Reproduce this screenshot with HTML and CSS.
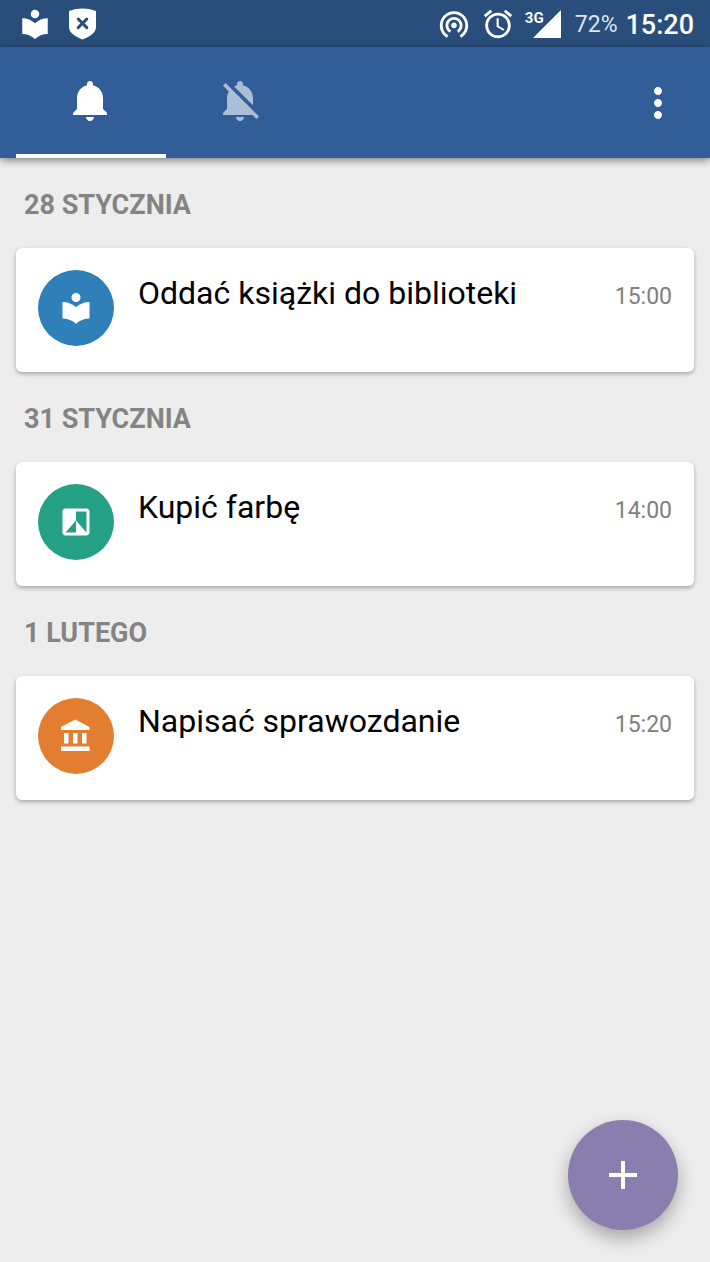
FILE: index.html
```html
<!DOCTYPE html>
<html lang="pl">
<head>
  <meta charset="UTF-8">
  <meta name="viewport" content="width=device-width, initial-scale=1.0">
  <title>Przypomnienia</title>
  <link rel="stylesheet" href="styles.css">
</head>
<body>

  <div class="statusbar">
    <div class="notifications">
      <svg class="status-icon" viewBox="0 0 24 24"><path d="M12 11.55C9.64 9.35 6.48 8 3 8v11c3.48 0 6.64 1.35 9 3.55 2.36-2.19 5.52-3.55 9-3.55V8c-3.48 0-6.64 1.35-9 3.55zM12 8c1.66 0 3-1.34 3-3s-1.34-3-3-3-3 1.34-3 3 1.34 3 3 3z"/></svg>
      <svg class="shield" viewBox="0 0 27 32">
        <path d="M0 3Q13.500-1.800 27 3V19C27 25 20 29 13.500 31.500C7 29 0 25 0 19z"/>
        <path class="cross" d="M9.200 11l8.600 8.600M17.800 11l-8.600 8.600"/>
      </svg>
    </div>
    <div class="system">
      <svg class="status-icon" viewBox="0 0 24 24"><path d="M12 11c-1.100 0-2 .9-2 2s.9 2 2 2 2-.9 2-2-.9-2-2-2zm6 2c0-3.310-2.690-6-6-6s-6 2.690-6 6c0 2.220 1.210 4.150 3 5.190l1-1.740c-1.190-.7-2-1.970-2-3.450 0-2.210 1.790-4 4-4s4 1.790 4 4c0 1.480-.81 2.750-2 3.450l1 1.740c1.790-1.040 3-2.970 3-5.190zM12 3C6.480 3 2 7.480 2 13c0 3.700 2.010 6.920 4.990 8.650l1-1.730C5.610 18.530 4 15.960 4 13c0-4.420 3.580-8 8-8s8 3.580 8 8c0 2.960-1.610 5.530-4 6.920l1 1.730c2.990-1.730 5-4.950 5-8.650 0-5.520-4.480-10-10-10z"/></svg>
      <svg class="status-icon" viewBox="0 0 24 24"><path d="M22 5.720l-4.600-3.860-1.290 1.530 4.600 3.860L22 5.720zM7.880 3.390L6.600 1.860 2 5.710l1.290 1.530 4.590-3.850zM12.500 8H11v6l4.750 2.850.75-1.230-4-2.370V8zM12 4c-4.970 0-9 4.030-9 9s4.020 9 9 9c4.970 0 9-4.030 9-9s-4.030-9-9-9zm0 16c-3.870 0-7-3.130-7-7s3.130-7 7-7 7 3.130 7 7-3.130 7-7 7z"/></svg>
      <div class="network">
        <svg class="signal" viewBox="0 0 28 28"><path d="M28 0v28H0z"/></svg>
        <span class="network-type">3G</span>
      </div>
      <span class="battery">72%</span>
      <span class="clock">15:20</span>
    </div>
  </div>

  <header class="appbar">
    <nav class="tabs">
      <button class="tab active" aria-label="Aktywne">
        <svg class="icon" viewBox="0 0 24 24"><path d="M11.500 22c1.100 0 2-.9 2-2h-4c0 1.100.9 2 2 2zm6.500-6v-5.500c0-3.070-2.130-5.640-5-6.320V3.500c0-.83-.67-1.500-1.500-1.500S10 2.670 10 3.500v.68c-2.870.68-5 3.250-5 6.320V16l-2 2v1h17v-1l-2-2z"/></svg>
      </button>
      <button class="tab" aria-label="Nieaktywne">
        <svg class="icon" viewBox="0 0 24 24"><path d="M11.500 22c1.100 0 2-.9 2-2h-4c0 1.100.9 2 2 2zM18 10.500c0-3.070-2.130-5.640-5-6.320V3.500c0-.83-.67-1.500-1.500-1.500S10 2.670 10 3.500v.68c-.51.12-.99.32-1.450.56L18 14.180V10.500zm-.27 8.500l2 2L21 19.730 4.270 3 3 4.270l2.920 2.920C5.340 8.160 5 9.290 5 10.500V16l-2 2v1h14.730z"/></svg>
      </button>
    </nav>
    <button class="menu-btn" aria-label="Menu">
      <svg class="icon" viewBox="0 0 24 24"><path d="M12 8c1.100 0 2-.9 2-2s-.9-2-2-2-2 .9-2 2 .9 2 2 2zm0 2c-1.100 0-2 .9-2 2s.9 2 2 2 2-.9 2-2-.9-2-2-2zm0 6c-1.100 0-2 .9-2 2s.9 2 2 2 2-.9 2-2-.9-2-2-2z"/></svg>
    </button>
  </header>

  <main class="list">
    <h2>28 STYCZNIA</h2>
    <article class="card">
      <div class="avatar blue">
        <svg viewBox="0 0 24 24"><path d="M12 11.550C9.640 9.350 6.480 8 3 8v11c3.480 0 6.640 1.350 9 3.550 2.360-2.190 5.520-3.550 9-3.550V8c-3.480 0-6.640 1.350-9 3.550zM12 8c1.660 0 3-1.340 3-3s-1.340-3-3-3-3 1.340-3 3 1.340 3 3 3z"/></svg>
      </div>
      <div class="card-text">
        <h3>Oddać książki do biblioteki</h3>
        <time>15:00</time>
      </div>
    </article>

    <h2>31 STYCZNIA</h2>
    <article class="card">
      <div class="avatar green">
        <svg viewBox="0 0 24 24"><path d="M19 3H5c-1.100 0-2 .9-2 2v14c0 1.100.9 2 2 2h14c1.100 0 2-.9 2-2V5c0-1.100-.9-2-2-2zm0 16l-7-8v8H5l7-8V5h7v14z"/></svg>
      </div>
      <div class="card-text">
        <h3>Kupić farbę</h3>
        <time>14:00</time>
      </div>
    </article>

    <h2>1 LUTEGO</h2>
    <article class="card">
      <div class="avatar orange">
        <svg viewBox="0 0 24 24"><path d="M4 10v7h3v-7H4zm6 0v7h3v-7h-3zM2 22h19v-3H2v3zm14-12v7h3v-7h-3zm-4.500-9L2 6v2h19V6l-9.500-5z"/></svg>
      </div>
      <div class="card-text">
        <h3>Napisać sprawozdanie</h3>
        <time>15:20</time>
      </div>
    </article>
  </main>

  <button class="fab" aria-label="Dodaj">
    <svg class="icon" viewBox="0 0 24 24"><path d="M19 13h-6v6h-2v-6H5v-2h6V5h2v6h6v2z"/></svg>
  </button>

</body>
</html>
```

FILE: styles.css
```css
* {
  box-sizing: border-box;
}

body {
  margin: 0;
  min-height: 100vh;
  font-family: Roboto, sans-serif;
  background: #ededed;
}

svg {
  display: block;
  fill: #fff;
}

button {
  padding: 0;
  border: none;
  background: none;
  cursor: pointer;
}

h2, h3 {
  margin: 0;
}

.icon {
  width: 48px;
  height: 48px;
}

/* Status bar */
.statusbar {
  display: flex;
  justify-content: space-between;
  align-items: center;
  height: 47px;
  padding: 0 16px 0 18px;
  background: #294e7c;
  color: #fff;
}

.notifications, .system {
  display: flex;
  align-items: center;
}

.notifications {
  gap: 17px;
}

.system {
  gap: 8px;
}

.status-icon {
  width: 34px;
  height: 34px;
}

.system .status-icon {
  margin-right: 2px;
}

.shield {
  width: 27px;
  height: 32px;
}

.cross {
  fill: none;
  stroke: #294e7c;
  stroke-width: 3;
  stroke-linecap: round;
}

.network {
  position: relative;
  padding-left: 8px;
}

.signal {
  width: 28px;
  height: 28px;
}

.network-type {
  position: absolute;
  top: 0;
  left: 0;
  font-size: 15px;
  line-height: 16px;
  font-weight: bold;
}

.battery, .clock {
  padding-top: 2px;
}

.battery {
  margin-left: 6px;
  font-size: 23px;
  color: #dfe5ec;
}

.clock {
  font-size: 27px;
  font-weight: 500;
}

/* App bar */
.appbar {
  display: flex;
  justify-content: space-between;
  height: 111px;
  padding: 0 28px 0 16px;
  background: #315e98;
  box-shadow: 0 2px 8px rgba(0, 0, 0, 0.5);
}

.tabs {
  display: flex;
}

.tab {
  display: flex;
  justify-content: center;
  align-items: center;
  width: 150px;
  border-bottom: 4px solid transparent;
}

.tab svg {
  opacity: 0.6;
}

.tab.active {
  border-bottom-color: #fff;
}

.tab.active svg {
  opacity: 1;
}

/* Reminders */
.list {
  padding: 0 16px;
}

h2 {
  padding: 4px 8px 0;
  font-size: 27px;
  line-height: 86px;
  font-weight: bold;
  color: #848484;
}

.card {
  display: flex;
  gap: 24px;
  min-height: 124px;
  padding: 22px;
  background: #fff;
  border-radius: 6px;
  box-shadow: 0 2px 4px rgba(0, 0, 0, 0.3);
}

.avatar {
  display: flex;
  justify-content: center;
  align-items: center;
  flex-shrink: 0;
  width: 76px;
  height: 76px;
  border-radius: 50%;
}

.avatar svg {
  width: 36px;
  height: 36px;
}

.blue {
  background: #2f80b9;
}

.green {
  background: #24a085;
}

.orange {
  background: #e37e30;
}

.card-text {
  display: flex;
  flex: 1;
  justify-content: space-between;
  align-items: baseline;
  padding-top: 4px;
}

h3 {
  font-size: 32px;
  line-height: 38px;
  font-weight: normal;
  color: #000;
}

time {
  font-size: 23px;
  color: #808080;
}

/* Floating button */
.fab {
  position: fixed;
  right: 32px;
  bottom: 32px;
  display: flex;
  justify-content: center;
  align-items: center;
  width: 110px;
  height: 110px;
  border-radius: 50%;
  background: #8a7eae;
  box-shadow: 0 8px 18px rgba(0, 0, 0, 0.3);
}
```
